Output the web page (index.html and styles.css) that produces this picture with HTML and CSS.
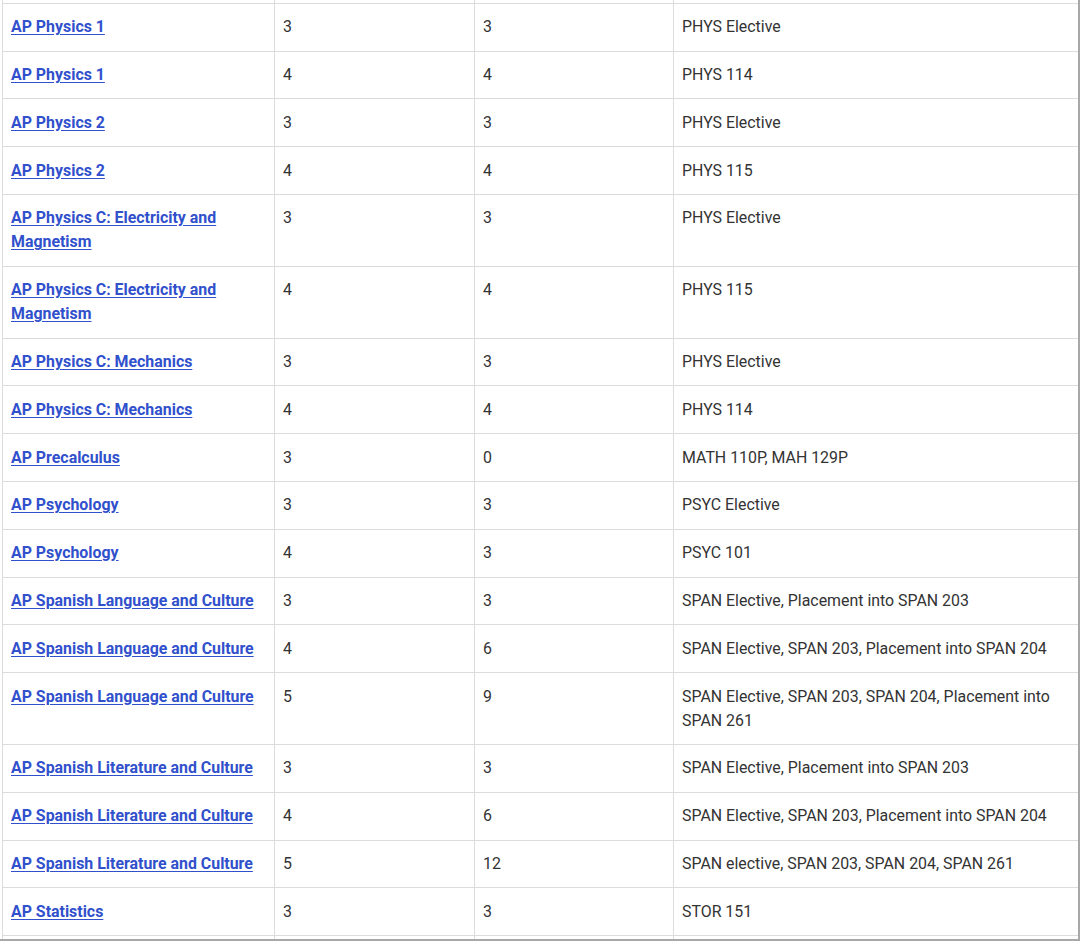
FILE: index.html
```html
<!DOCTYPE html>
<html lang="en">
<head>
<meta charset="utf-8">
<link rel="stylesheet" href="styles.css">
<title>AP Credit</title>
</head>
<body>
<div class="frame">
  <table class="credit">
    <colgroup>
      <col class="c-exam">
      <col class="c-score">
      <col class="c-hours">
      <col class="c-course">
    </colgroup>
    <tbody>
      <tr class="edge-row"><td></td><td></td><td></td><td></td></tr>
      <tr><td><a href="#">AP Physics 1</a></td><td>3</td><td>3</td><td>PHYS Elective</td></tr>
      <tr><td><a href="#">AP Physics 1</a></td><td>4</td><td>4</td><td>PHYS 114</td></tr>
      <tr><td><a href="#">AP Physics 2</a></td><td>3</td><td>3</td><td>PHYS Elective</td></tr>
      <tr><td><a href="#">AP Physics 2</a></td><td>4</td><td>4</td><td>PHYS 115</td></tr>
      <tr><td><a href="#">AP Physics C: Electricity and Magnetism</a></td><td>3</td><td>3</td><td>PHYS Elective</td></tr>
      <tr><td><a href="#">AP Physics C: Electricity and Magnetism</a></td><td>4</td><td>4</td><td>PHYS 115</td></tr>
      <tr><td><a href="#">AP Physics C: Mechanics</a></td><td>3</td><td>3</td><td>PHYS Elective</td></tr>
      <tr><td><a href="#">AP Physics C: Mechanics</a></td><td>4</td><td>4</td><td>PHYS 114</td></tr>
      <tr><td><a href="#">AP Precalculus</a></td><td>3</td><td>0</td><td>MATH 110P, MAH 129P</td></tr>
      <tr><td><a href="#">AP Psychology</a></td><td>3</td><td>3</td><td>PSYC Elective</td></tr>
      <tr><td><a href="#">AP Psychology</a></td><td>4</td><td>3</td><td>PSYC 101</td></tr>
      <tr><td><a href="#">AP Spanish Language and Culture</a></td><td>3</td><td>3</td><td>SPAN Elective, Placement into SPAN 203</td></tr>
      <tr><td><a href="#">AP Spanish Language and Culture</a></td><td>4</td><td>6</td><td>SPAN Elective, SPAN 203, Placement into SPAN 204</td></tr>
      <tr><td><a href="#">AP Spanish Language and Culture</a></td><td>5</td><td>9</td><td>SPAN Elective, SPAN 203, SPAN 204, Placement into SPAN 261</td></tr>
      <tr><td><a href="#">AP Spanish Literature and Culture</a></td><td>3</td><td>3</td><td>SPAN Elective, Placement into SPAN 203</td></tr>
      <tr><td><a href="#">AP Spanish Literature and Culture</a></td><td>4</td><td>6</td><td>SPAN Elective, SPAN 203, Placement into SPAN 204</td></tr>
      <tr><td><a href="#">AP Spanish Literature and Culture</a></td><td>5</td><td>12</td><td>SPAN elective, SPAN 203, SPAN 204, SPAN 261</td></tr>
      <tr><td><a href="#">AP Statistics</a></td><td>3</td><td>3</td><td>STOR 151</td></tr>
      <tr class="edge-row"><td></td><td></td><td></td><td></td></tr>
    </tbody>
  </table>
</div>
</body>
</html>
```

FILE: styles.css
```css
html, body {
  margin: 0;
  padding: 0;
  background: #ffffff;
}

.frame {
  width: 1078px;
  height: 939px;
  overflow: hidden;
  border-right: 2px solid #a8a8a8;
  border-bottom: 2px solid #a8a8a8;
  background: #ffffff;
}

.credit {
  margin: -45px 0 0 2px;
  width: 1076px;
  table-layout: fixed;
  border-collapse: collapse;
  font-family: Roboto, "Liberation Sans", Arial, sans-serif;
  font-size: 15.9px;
  line-height: 24px;
  color: #333333;
}

.c-exam { width: 272px; }
.c-score { width: 200px; }
.c-hours { width: 199px; }
.c-course { width: 405px; }

.credit td {
  border: 1px solid #dcdcdc;
  padding: 11.5px 8px 11.3px 8px;
  vertical-align: top;
  text-align: left;
}

.credit .edge-row td {
  height: 24px;
}

.credit a {
  color: #3150cc;
  font-weight: 700;
  text-decoration: underline;
  text-underline-offset: 2px;
}
```
